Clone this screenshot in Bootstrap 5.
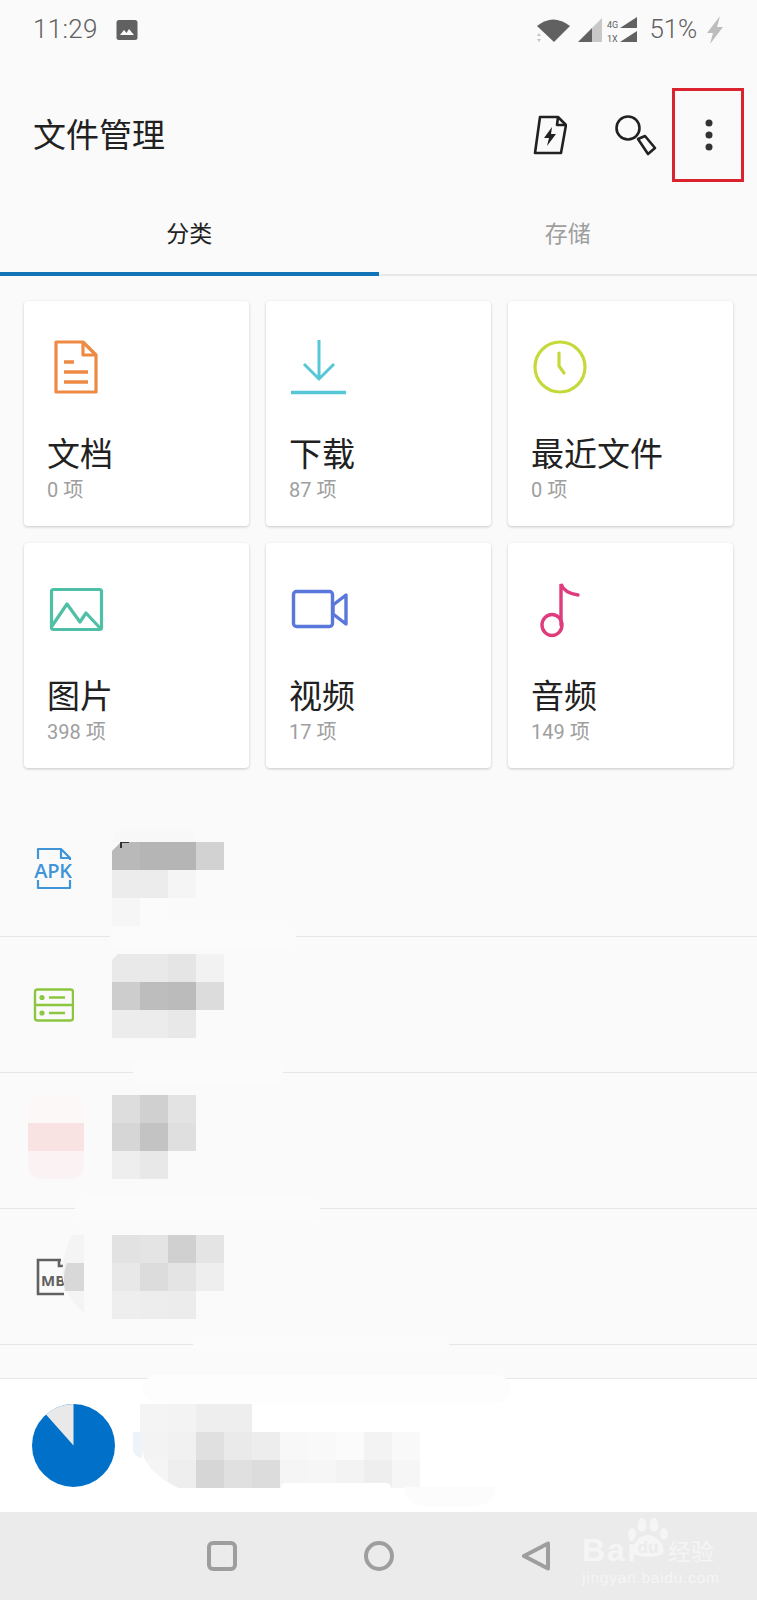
<!DOCTYPE html>
<html lang="zh-CN">
<head>
  <meta charset="UTF-8" />
  <meta name="viewport" content="width=device-width, initial-scale=1.0"/>
  <title>文件管理</title>

  <link href="https://cdn.jsdelivr.net/npm/bootstrap@5.3.3/dist/css/bootstrap.min.css" rel="stylesheet">

  <style>
    html, body { margin: 0; background: #fafafa; }

    .phone {
      position: relative;
      width: 757px;
      height: 1600px;
      overflow: hidden;
      background: #fafafa;
      font-family: Roboto, "Noto Sans CJK SC", sans-serif;
      color: #212121;
    }

    /* status bar */
    .status-bar { height: 57px; padding: 2px 33px 0; color: #616161; }
    .status-time { font-size: 26px; font-weight: 300; margin-right: 18px; letter-spacing: .3px; }
    .status-pct { font-size: 26px; font-weight: 300; margin: 0 9px 0 11px; letter-spacing: -.2px; }

    /* app bar */
    .app-bar { height: 138px; padding: 18px 42px 0 33px; }
    .app-title { font-size: 33px; margin: 0; font-weight: 400; line-height: 1; }
    .act-flash { margin-right: 48px; }
    .act-search { margin-right: 46px; }
    .red-box {
      position: absolute;
      left: 672px;
      top: 88px;
      width: 72px;
      height: 94px;
      border: 3px solid #d9232e;
    }

    /* tabs */
    .tab-strip { height: 81px; border-bottom: 2px solid #e8e8e8; }
    .tab-item {
      width: 50%;
      height: 81px;
      padding-top: 22px;
      text-align: center;
      font-size: 23px;
      line-height: 36px;
      color: #9e9e9e;
    }
    .tab-item.is-on { color: #212121; border-bottom: 4px solid #1173b8; }

    /* category cards */
    .cat-grid {
      display: grid;
      grid-template-columns: repeat(3, 225px);
      grid-auto-rows: 225px;
      column-gap: 17px;
      row-gap: 17px;
      padding: 25px 0 0 24px;
    }
    .cat-card {
      border: 0;
      border-radius: 4px;
      background: #fff;
      box-shadow: 0 1px 3px rgba(0, 0, 0, .2);
      padding: 35px 0 0 23px;
    }
    .cat-icon { display: block; margin-bottom: 40px; }
    .cat-name { font-size: 33px; line-height: 38px; color: #212121; }
    .cat-count { font-size: 20px; line-height: 28px; margin-top: 2px; color: #9e9e9e; }

    /* recent files */
    .file-list { margin-top: 33px; }
    .file-row { height: 136px; padding-left: 28px; border-bottom: 1px solid #e6e6e6; position: relative; }
    .file-slot { width: 56px; margin-right: 28px; position: relative; }
    .mosaic { display: block; }
    .top-41 { margin-top: 41px; }
    .top-17 { margin-top: 17px; }
    .top-22 { margin-top: 22px; }
    .top-26 { margin-top: 26px; }
    .cut-corner { clip-path: polygon(0 9px, 9px 0, 100% 0, 100% 100%, 0 100%); }
    .cut-corner-sm { clip-path: polygon(0 6px, 6px 0, 100% 0, 100% 100%, 0 100%); }
    .cut-bottom { clip-path: polygon(0 0, 100% 0, 100% 100%, 38px 100%, 24px 76px, 12px 66px, 5px 56px, 0 40px); }
    .round-blob { border-radius: 12px; }
    .name-scrap {
      position: absolute;
      left: 120px;
      top: 40px;
      width: 9px;
      height: 7px;
      border: solid #333;
      border-width: 2px 0 0 2px;
    }
    .mb-cover { position: absolute; left: 34px; top: 26px; }

    /* storage */
    .list-gap { height: 33px; }
    .storage-bar { height: 134px; padding: 25px 0 0 32px; background: #fff; border-top: 1px solid #e8e8e8; }
    .pie-chart { margin-right: 25px; }

    /* system navigation */
    .sys-nav { height: 88px; background: #ebebeb; gap: 127px; }

    /* smudges left by the blur over the dividers */
    .smudge { position: absolute; background: #fbfbfb; border-radius: 14px; }
    .sm-a { left: 110px; top: 927px; width: 186px; height: 22px; }
    .sm-b { left: 133px; top: 1060px; width: 150px; height: 24px; }
    .sm-c { left: 75px; top: 1198px; width: 245px; height: 24px; }
    .sm-d { left: 193px; top: 1336px; width: 256px; height: 16px; }
    .sm-e { left: 143px; top: 1375px; width: 367px; height: 28px; background: #fdfdfd; }
    .sm-f { left: 405px; top: 1487px; width: 90px; height: 19px; background: #fcfcfc; border-radius: 0 0 45px 45px; }
    .sm-g { left: 112px; top: 829px; width: 84px; height: 13px; background: #f8f8f8; border-radius: 14px 14px 0 0; }
    .sm-h { left: 133px; top: 1432px; width: 9px; height: 26px; background: #eef3fa; border-radius: 0 0 0 12px; }
    .sm-i { left: 281px; top: 1483px; width: 110px; height: 5px; background: #fff; border-radius: 14px 14px 0 0; }

    /* watermark */
    .baidu-mark { position: absolute; left: 582px; top: 1518px; width: 140px; height: 70px; color: #f5f5f5; }
    .bd-word { position: absolute; left: 0; top: 15px; font: 700 32px/34px "Liberation Sans", sans-serif; letter-spacing: 2px; }
    .bd-paw { position: absolute; left: 45px; top: 0; }
    .bd-cn { position: absolute; left: 86px; top: 18px; font: 400 23px/28px "Noto Sans CJK SC", sans-serif; }
    .bd-url { position: absolute; left: 0; top: 51px; font: 400 15.5px/18px "Liberation Sans", sans-serif; letter-spacing: .75px; white-space: nowrap; }
  </style>
</head>
<body>

<div class="phone d-flex flex-column">

  <!-- status bar -->
  <div class="status-bar d-flex align-items-center">
    <span class="status-time">11:29</span>
    <svg width="22" height="22" viewBox="0 0 22 22"><rect x="0.5" y="1" width="21" height="20" rx="2.5" fill="#616161"/><path d="M4 16l4-5 2.5 3 2.5-4 5 6z" fill="#fafafa"/></svg>
    <div class="ms-auto d-flex align-items-center">
      <svg width="102" height="28" viewBox="0 0 102 28">
        <path d="M0 10Q16-3 33 10L17 26z" fill="#616161"/>
        <path d="M0 20l2-3 2 3zM0 23l2 3 2-3z" fill="#c4c4c4"/>
        <path d="M41 26L55 12V26z" fill="#616161"/>
        <path d="M55 12L65 2V26H55z" fill="#c8c8c8"/>
        <text x="70" y="12" font-size="9" fill="#616161" font-family="Roboto, sans-serif">4G</text>
        <text x="70" y="26" font-size="9" fill="#616161" font-family="Roboto, sans-serif">1X</text>
        <path d="M83 12L100 1V12zM83 26L100 15V26z" fill="#616161"/>
      </svg>
      <span class="status-pct">51%</span>
      <svg width="18" height="28" viewBox="0 0 18 28"><path d="M14 0L1 17h6L4 28l13-17h-6z" fill="#bdbdbd"/></svg>
    </div>
  </div>

  <!-- app bar -->
  <div class="app-bar d-flex align-items-center">
    <h1 class="app-title">文件管理</h1>
    <div class="ms-auto d-flex align-items-center">
      <svg class="act-flash" width="34" height="40" viewBox="0 0 34 40" fill="none" stroke="#212121" stroke-width="2.6" stroke-linejoin="round">
        <path d="M7 2H25L33 10L28 38H2z"/><path d="M25 2L24 10H33"/>
        <path d="M19 12L11 23H16L14 31L23 19H18z" fill="#212121" stroke="none"/>
      </svg>
      <svg class="act-search" width="42" height="42" viewBox="0 0 42 42" fill="none" stroke="#212121" stroke-width="2.6" stroke-linejoin="round">
        <circle cx="13" cy="14" r="11.500"/><path d="M23 25L30 22 40 34 33 40z"/>
      </svg>
      <svg width="12" height="36" viewBox="0 0 12 36" fill="#333"><circle cx="6" cy="6" r="3.5"/><circle cx="6" cy="18" r="3.5"/><circle cx="6" cy="30" r="3.5"/></svg>
    </div>
  </div>
  <div class="red-box"></div>

  <!-- tabs -->
  <div class="tab-strip d-flex">
    <div class="tab-item is-on">分类</div>
    <div class="tab-item">存储</div>
  </div>

  <!-- categories -->
  <div class="cat-grid">
    <div class="card cat-card">
      <svg class="cat-icon" width="60" height="60" viewBox="0 0 60 60" fill="none" stroke="#ee8a44" stroke-width="3.2" stroke-linejoin="round">
        <path d="M9 6H36L49 19V56H9z"/><path d="M36 6V19H49"/><path d="M17 26H27M17 36H41M17 46H41" stroke-width="3.4"/>
      </svg>
      <div class="cat-name">文档</div>
      <div class="cat-count">0 项</div>
    </div>
    <div class="card cat-card">
      <svg class="cat-icon" width="60" height="60" viewBox="0 0 60 60" fill="none" stroke="#56c7d6" stroke-width="3">
        <path d="M30 4V43M15 28L30 43 45 28"/><path d="M2 56.500H57" stroke-width="3.600"/>
      </svg>
      <div class="cat-name">下载</div>
      <div class="cat-count">87 项</div>
    </div>
    <div class="card cat-card">
      <svg class="cat-icon" width="60" height="60" viewBox="0 0 60 60" fill="none" stroke="#c5d93a" stroke-width="3.200" stroke-linecap="round">
        <circle cx="29" cy="31" r="25"/><path d="M28 17V30L33 37"/>
      </svg>
      <div class="cat-name">最近文件</div>
      <div class="cat-count">0 项</div>
    </div>
    <div class="card cat-card">
      <svg class="cat-icon" width="60" height="60" viewBox="0 0 60 60" fill="none" stroke="#4fbfa5" stroke-width="3.200" stroke-linejoin="round">
        <rect x="4.500" y="11.500" width="50" height="40" rx="2"/><path d="M5 48L20 26 33 44 39 35 53 50"/>
      </svg>
      <div class="cat-name">图片</div>
      <div class="cat-count">398 项</div>
    </div>
    <div class="card cat-card">
      <svg class="cat-icon" width="60" height="60" viewBox="0 0 60 60" fill="none" stroke="#5a78dc" stroke-width="3.400" stroke-linejoin="round">
        <rect x="4.500" y="13.500" width="39" height="35" rx="3"/><path d="M44 27L57 17V46L44 36z"/>
      </svg>
      <div class="cat-name">视频</div>
      <div class="cat-count">17 项</div>
    </div>
    <div class="card cat-card">
      <svg class="cat-icon" width="60" height="60" viewBox="0 0 60 60" fill="none" stroke="#de3c7d" stroke-width="3.400" stroke-linecap="round">
        <ellipse cx="21" cy="47" rx="10" ry="10.500"/><path d="M30 47V6Q33 15 47 17"/>
      </svg>
      <div class="cat-name">音频</div>
      <div class="cat-count">149 项</div>
    </div>
  </div>

  <!-- recent files, names pixelated as in the source picture -->
  <div class="file-list">
    <div class="file-row d-flex">
      <div class="file-slot d-flex align-items-center">
        <svg class="ms-1" width="44" height="44" viewBox="0 0 44 44" fill="none" stroke="#3f95d8" stroke-width="2.200" stroke-linejoin="round">
          <path d="M6 12V2H29L38 11V13M29 2V11H38M6 33V41H38V33"/>
          <text x="21" y="31" text-anchor="middle" font-size="20" font-weight="600" letter-spacing="-.3" fill="#3f95d8" stroke="none" font-family="'Open Sans', sans-serif">APK</text>
        </svg>
      </div>
      <svg class="mosaic cut-corner top-41" data-cells="b9,b5,b5,d2;ec,ec,f5;f6,fb" width="112" height="84"></svg>
      <span class="name-scrap"></span>
    </div>
    <div class="file-row d-flex">
      <div class="file-slot d-flex align-items-center">
        <svg class="ms-1" width="42" height="34" viewBox="0 0 42 34" fill="none" stroke="#8cc63f" stroke-width="2.400" stroke-linejoin="round">
          <rect x="3" y="1.500" width="38" height="31" rx="2.500"/><path d="M3 17H41"/><path d="M17 9.500H33M17 25H33"/>
          <circle cx="10" cy="9.500" r="1.400"/><circle cx="10" cy="25" r="1.400"/>
        </svg>
      </div>
      <svg class="mosaic cut-corner-sm top-17" data-cells="e9,e9,e5,f2;cd,bd,bb,dc;ec,ec,e8" width="112" height="84"></svg>
    </div>
    <div class="file-row d-flex">
      <div class="file-slot">
        <svg class="mosaic round-blob top-22" data-cells="fcf8f8,fcf8f8;f8e2e2,f8e2e2;fbf3f3,fbf3f3" width="56" height="84"></svg>
      </div>
      <svg class="mosaic top-22" data-cells="dd,d0,e3;d6,c3,df;ee,e8" width="84" height="84"></svg>
    </div>
    <div class="file-row d-flex">
      <div class="file-slot d-flex align-items-center">
        <svg class="ms-2" width="34" height="38" viewBox="0 0 34 38" fill="none" stroke="#616161" stroke-width="2.600">
          <path d="M25 2H2V36H28M23 2V8H27"/>
          <text x="5" y="28" font-size="15" font-weight="700" fill="#616161" stroke="none" font-family="'Open Sans', sans-serif">MB</text>
        </svg>
        <svg class="mb-cover" width="22" height="78" viewBox="0 0 22 78"><path d="M22 0V78Q2 60 0 40Q1 16 10 0z" fill="#f4f4f4"/><path d="M22 28V56H3Q0 40 5 28z" fill="#d8d8d8"/></svg>
      </div>
      <svg class="mosaic top-26" data-cells="e2,e4,d0,e4;e8,dc,e4,ee;ee,ed,ec" width="112" height="84"></svg>
    </div>
  </div>
  <div class="list-gap"></div>

  <!-- storage -->
  <div class="storage-bar d-flex">
    <svg class="pie-chart" width="83" height="83" viewBox="0 0 83 83">
      <circle cx="41.500" cy="41.500" r="41.500" fill="#0070c9"/>
      <path d="M41.500 41.500V0A41.500 41.500 0 0 0 14 10.500z" fill="#e9e9e9"/>
    </svg>
    <svg class="mosaic cut-bottom" data-cells="f4,f3,ee,ee;f3,f1,e0,ea,ed,f8,f9,fb,f3,f9;f5,ee,d6,e0,dc,f5,f6,f3,ee,f6" width="280" height="84"></svg>
  </div>

  <!-- system navigation -->
  <div class="sys-nav d-flex align-items-center justify-content-center">
    <svg width="30" height="30" viewBox="0 0 30 30" fill="none" stroke="#9e9e9e" stroke-width="4"><rect x="2" y="2" width="26" height="26" rx="4"/></svg>
    <svg width="30" height="30" viewBox="0 0 30 30" fill="none" stroke="#9e9e9e" stroke-width="4"><circle cx="15" cy="15" r="13"/></svg>
    <svg width="30" height="30" viewBox="0 0 30 30" fill="none" stroke="#9e9e9e" stroke-width="4" stroke-linejoin="round"><path d="M27 2.500V27.500L3 15z"/></svg>
  </div>

  <!-- over the content -->
  <div class="smudge sm-g"></div>
  <div class="smudge sm-a"></div>
  <div class="smudge sm-b"></div>
  <div class="smudge sm-c"></div>
  <div class="smudge sm-d"></div>
  <div class="smudge sm-e"></div>
  <div class="smudge sm-f"></div>
  <div class="smudge sm-h"></div>
  <div class="smudge sm-i"></div>

  <div class="baidu-mark">
    <span class="bd-word">Bai</span>
    <svg class="bd-paw" width="42" height="40" viewBox="0 0 42 40" fill="#f5f5f5">
      <ellipse cx="5" cy="16" rx="4" ry="6"/><ellipse cx="15" cy="7" rx="4.500" ry="7"/><ellipse cx="27" cy="7" rx="4.500" ry="7"/><ellipse cx="37" cy="16" rx="4" ry="6"/>
      <path d="M21 17C12 17 3 28 6 35 9 40 33 40 36 35 39 28 30 17 21 17z"/>
      <text x="21" y="35" text-anchor="middle" font-size="17" font-weight="700" fill="#ebebeb" font-family="'Liberation Sans', sans-serif">du</text>
    </svg>
    <span class="bd-cn">经验</span>
    <span class="bd-url">jingyan.baidu.com</span>
  </div>

</div>

<script src="https://cdn.jsdelivr.net/npm/bootstrap@5.3.3/dist/js/bootstrap.bundle.min.js"></script>
<script>
  // pixelated blocks: rows separated by ";", each cell is a grey or a hex colour
  const NS = "http://www.w3.org/2000/svg";
  const CELL = 28;

  document.querySelectorAll(".mosaic[data-cells]").forEach(svg => {
    svg.setAttribute("shape-rendering", "crispEdges");
    svg.dataset.cells.split(";").forEach((row, y) => {
      row.split(",").forEach((c, x) => {
        const r = document.createElementNS(NS, "rect");
        r.setAttribute("x", x * CELL);
        r.setAttribute("y", y * CELL);
        r.setAttribute("width", CELL);
        r.setAttribute("height", CELL);
        r.setAttribute("fill", c.length === 2 ? "#" + c + c + c : "#" + c);
        svg.appendChild(r);
      });
    });
  });
</script>

</body>
</html>
